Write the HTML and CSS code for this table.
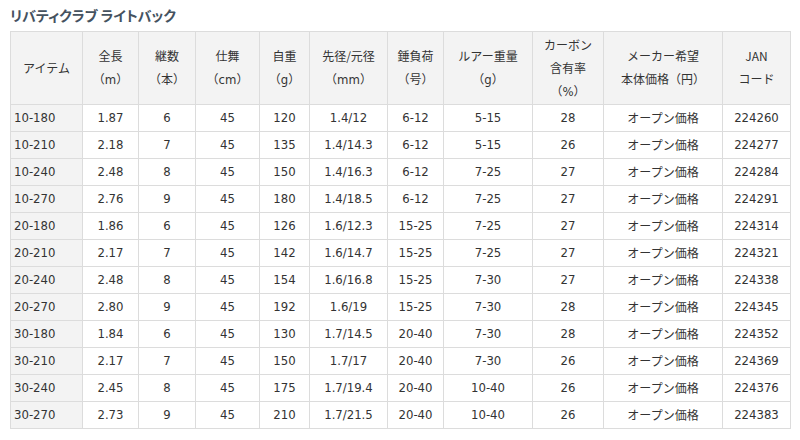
FILE: index.html
```html
<!DOCTYPE html>
<html lang="ja">
<head>
<meta charset="utf-8">
<link rel="stylesheet" href="styles.css">
</head>
<body>
<h2 class="title">リバティクラブ ライトバック</h2>
<table class="spec">
<colgroup>
<col class="c1"><col class="c2"><col class="c3"><col class="c4"><col class="c5"><col class="c6"><col class="c7"><col class="c8"><col class="c9"><col class="c10"><col class="c11">
</colgroup>
<thead>
<tr>
<th class="ja">アイテム</th>
<th><span class="ja">全長</span><br><span class="ja">（</span>m<span class="ja">）</span></th>
<th><span class="ja">継数</span><br><span class="ja">（本）</span></th>
<th><span class="ja">仕舞</span><br><span class="ja">（</span>cm<span class="ja">）</span></th>
<th><span class="ja">自重</span><br><span class="ja">（</span>g<span class="ja">）</span></th>
<th><span class="ja">先径/元径</span><br><span class="ja">（</span>mm<span class="ja">）</span></th>
<th><span class="ja">錘負荷</span><br><span class="ja">（号）</span></th>
<th><span class="ja">ルアー重量</span><br><span class="ja">（</span>g<span class="ja">）</span></th>
<th><span class="ja">カーボン</span><br><span class="ja">含有率</span><br><span class="ja">（</span>%<span class="ja">）</span></th>
<th><span class="ja">メーカー希望</span><br><span class="ja">本体価格（円）</span></th>
<th><span class="ja">JAN</span><br><span class="ja">コード</span></th>
</tr>
</thead>
<tbody>
<tr><td>10-180</td><td>1.87</td><td>6</td><td>45</td><td>120</td><td>1.4/12</td><td>6-12</td><td>5-15</td><td>28</td><td class="ja">オープン価格</td><td>224260</td></tr>
<tr><td>10-210</td><td>2.18</td><td>7</td><td>45</td><td>135</td><td>1.4/14.3</td><td>6-12</td><td>5-15</td><td>26</td><td class="ja">オープン価格</td><td>224277</td></tr>
<tr><td>10-240</td><td>2.48</td><td>8</td><td>45</td><td>150</td><td>1.4/16.3</td><td>6-12</td><td>7-25</td><td>27</td><td class="ja">オープン価格</td><td>224284</td></tr>
<tr><td>10-270</td><td>2.76</td><td>9</td><td>45</td><td>180</td><td>1.4/18.5</td><td>6-12</td><td>7-25</td><td>27</td><td class="ja">オープン価格</td><td>224291</td></tr>
<tr><td>20-180</td><td>1.86</td><td>6</td><td>45</td><td>126</td><td>1.6/12.3</td><td>15-25</td><td>7-25</td><td>27</td><td class="ja">オープン価格</td><td>224314</td></tr>
<tr><td>20-210</td><td>2.17</td><td>7</td><td>45</td><td>142</td><td>1.6/14.7</td><td>15-25</td><td>7-25</td><td>27</td><td class="ja">オープン価格</td><td>224321</td></tr>
<tr><td>20-240</td><td>2.48</td><td>8</td><td>45</td><td>154</td><td>1.6/16.8</td><td>15-25</td><td>7-30</td><td>27</td><td class="ja">オープン価格</td><td>224338</td></tr>
<tr><td>20-270</td><td>2.80</td><td>9</td><td>45</td><td>192</td><td>1.6/19</td><td>15-25</td><td>7-30</td><td>28</td><td class="ja">オープン価格</td><td>224345</td></tr>
<tr><td>30-180</td><td>1.84</td><td>6</td><td>45</td><td>130</td><td>1.7/14.5</td><td>20-40</td><td>7-30</td><td>28</td><td class="ja">オープン価格</td><td>224352</td></tr>
<tr><td>30-210</td><td>2.17</td><td>7</td><td>45</td><td>150</td><td>1.7/17</td><td>20-40</td><td>7-30</td><td>26</td><td class="ja">オープン価格</td><td>224369</td></tr>
<tr><td>30-240</td><td>2.45</td><td>8</td><td>45</td><td>175</td><td>1.7/19.4</td><td>20-40</td><td>10-40</td><td>26</td><td class="ja">オープン価格</td><td>224376</td></tr>
<tr><td>30-270</td><td>2.73</td><td>9</td><td>45</td><td>210</td><td>1.7/21.5</td><td>20-40</td><td>10-40</td><td>26</td><td class="ja">オープン価格</td><td>224383</td></tr>
</tbody>
</table>
</body>
</html>
```
FILE: styles.css
```css
html, body {
  margin: 0;
  padding: 0;
  background: #fff;
}
body {
  padding: 7px 10px 0 10px;
  font-family: "DejaVu Sans Condensed", "DejaVu Sans", "Noto Sans CJK JP", sans-serif;
  font-stretch: condensed;
  font-size: 13px;
  color: #333;
}
.title {
  margin: 0 0 7px 0;
  height: 17px;
  line-height: 17px;
  font-family: "Noto Sans CJK JP", sans-serif;
  font-feature-settings: "palt";
  font-size: 14px;
  font-weight: 600;
  color: #45525f;
}
.ja {
  font-family: "Noto Sans CJK JP", sans-serif;
  font-size: 12px;
}
.spec {
  border-collapse: collapse;
  table-layout: fixed;
  width: 781px;
}
.spec th, .spec td {
  border: 1px solid #dcdcdc;
  padding: 0;
  text-align: center;
  font-weight: normal;
}
.spec th {
  background: #f3f3f3;
  height: 72px;
  line-height: 22px;
}
.spec td {
  height: 26px;
  line-height: 20px;
}
.spec td:first-child {
  background: #f3f3f3;
  text-align: left;
  padding-left: 3px;
}
.c1 { width: 72px; }
.c2 { width: 56px; }
.c3 { width: 57px; }
.c4 { width: 64px; }
.c5 { width: 50px; }
.c6 { width: 78px; }
.c7 { width: 56px; }
.c8 { width: 89px; }
.c9 { width: 71px; }
.c10 { width: 119px; }
.c11 { width: 68px; }
```
